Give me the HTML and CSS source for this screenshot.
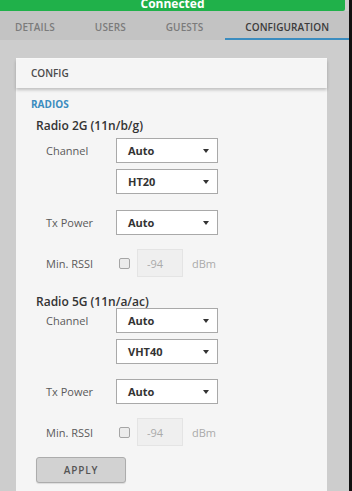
FILE: index.html
```html
<!DOCTYPE html>
<html lang="en">
  <head>
    <meta charset="UTF-8" />
    <meta name="viewport" content="width=device-width, initial-scale=1.0" />
    <title>Device Configuration</title>

    <link rel="stylesheet" href="styles.css">
  </head>
  <body>
    <div class="app">
      <div class="status">Connected</div>

      <nav class="tabs">
        <a class="tab">DETAILS</a>
        <a class="tab">USERS</a>
        <a class="tab">GUESTS</a>
        <a class="tab active">CONFIGURATION</a>
      </nav>

      <main class="content">
        <div class="card">
          <div class="card-header">CONFIG</div>

          <div class="card-body">
            <div class="section-title">RADIOS</div>

            <div class="radio">
              <h3 class="radio-title">Radio 2G (11n/b/g)</h3>

              <div class="row row-channel">
                <label>Channel</label>
                <div class="controls">
                  <div class="select"><span>Auto</span><i class="caret"></i></div>
                  <div class="select"><span>HT20</span><i class="caret"></i></div>
                </div>
              </div>

              <div class="row row-tx">
                <label>Tx Power</label>
                <div class="select"><span>Auto</span><i class="caret"></i></div>
              </div>

              <div class="row row-rssi">
                <label>Min. RSSI</label>
                <span class="checkbox"></span>
                <input type="text" class="rssi-input" value="-94" readonly />
                <span class="unit">dBm</span>
              </div>
            </div>

            <div class="radio radio-5g">
              <h3 class="radio-title">Radio 5G (11n/a/ac)</h3>

              <div class="row row-channel">
                <label>Channel</label>
                <div class="controls">
                  <div class="select"><span>Auto</span><i class="caret"></i></div>
                  <div class="select"><span>VHT40</span><i class="caret"></i></div>
                </div>
              </div>

              <div class="row row-tx">
                <label>Tx Power</label>
                <div class="select"><span>Auto</span><i class="caret"></i></div>
              </div>

              <div class="row row-rssi">
                <label>Min. RSSI</label>
                <span class="checkbox"></span>
                <input type="text" class="rssi-input" value="-94" readonly />
                <span class="unit">dBm</span>
              </div>
            </div>

            <button type="button" class="apply">APPLY</button>
          </div>
        </div>
      </main>
    </div>
  </body>
</html>
```

FILE: styles.css
```css
body {
  margin: 0;
  background-color: #111;
  font-family: "Open Sans", Arial, sans-serif;
  color: #333;
}
.app {
  width: 349px;
  height: 491px;
  overflow: hidden;
  background-color: #cdcdcd;
  display: flex;
  flex-direction: column;
}
.status {
  height: 11px;
  margin-right: 4px;
  background-color: #20b14a;
  border-bottom-right-radius: 2px;
  color: #fff;
  font-size: 12px;
  font-weight: 700;
  line-height: 8px;
  text-align: center;
  overflow: hidden;
}
.tabs {
  display: flex;
  height: 29px;
  background-color: #c3c3c3;
}
.tab {
  padding: 5px 20px 0;
  height: 22px;
  line-height: 22px;
  font-size: 10px;
  font-weight: 600;
  letter-spacing: 0.1px;
  color: #7b7b7b;
}
.tab:first-child {
  padding-left: 15px;
}
.tab.active {
  flex: 1;
  margin-left: 2px;
  color: #3b3b3b;
  border-bottom: 2px solid #3b8cbf;
}
.content {
  flex: 1;
  padding: 18px 22px 0 16px;
  display: flex;
}
.card {
  flex: 1;
  display: flex;
  flex-direction: column;
  background-color: #f4f4f4;
  border-top: 1px solid #fbfbfb;
}
.card-header {
  position: relative;
  z-index: 1;
  height: 29px;
  line-height: 29px;
  padding-left: 15px;
  font-size: 10px;
  font-weight: 600;
  color: #4a4a4a;
  background-color: #f5f5f5;
  box-shadow: 0 2px 3px rgba(0, 0, 0, 0.22);
}
.card-body {
  flex: 1;
  padding: 9px 0 0 15px;
  background-color: #f5f5f5;
}
.section-title {
  font-size: 10px;
  font-weight: 700;
  line-height: 14px;
  color: #3b8cbf;
}
.radio {
  padding-left: 5px;
}
.radio-title {
  margin: 7px 0 0;
  font-size: 12px;
  font-weight: 600;
  line-height: 16px;
  color: #333;
}
.radio-5g .radio-title {
  margin-top: 17px;
}
.row {
  display: flex;
  align-items: center;
  padding-left: 10px;
}
.row label {
  width: 70px;
  font-size: 11px;
  color: #5a5a5a;
}
.row-channel {
  align-items: flex-start;
  margin-top: 4px;
}
.row-channel label {
  line-height: 25px;
}
.radio-5g .row-channel {
  margin-top: -2px;
}
.controls {
  display: flex;
  flex-direction: column;
  gap: 6px;
}
.row-tx {
  margin-top: 16px;
}
.radio-5g .row-tx {
  margin-top: 15px;
}
.row-rssi {
  margin-top: 14px;
}
.select {
  box-sizing: border-box;
  width: 102px;
  height: 25px;
  padding: 0 8px 0 11px;
  display: flex;
  align-items: center;
  justify-content: space-between;
  background-color: #fff;
  border: 1px solid #a9a9a9;
  font-size: 11px;
  font-weight: 700;
  color: #333;
}
.caret {
  width: 0;
  height: 0;
  border-left: 3px solid transparent;
  border-right: 3px solid transparent;
  border-top: 4px solid #333;
}
.checkbox {
  box-sizing: border-box;
  width: 11px;
  height: 11px;
  margin-left: 3px;
  border: 1px solid #a5a5a5;
  border-radius: 2px;
  background-color: #ececec;
}
.rssi-input {
  box-sizing: border-box;
  width: 46px;
  height: 28px;
  margin: 0 0 0 7px;
  padding: 0 0 0 9px;
  border: 1px solid #e4e4e4;
  background-color: #efefef;
  font-family: "Open Sans", Arial, sans-serif;
  font-size: 11px;
  color: #aaa;
  outline: none;
}
.unit {
  margin-left: 9px;
  font-size: 11px;
  color: #aaa;
}
.apply {
  display: block;
  margin: 11px 0 0 5px;
  width: 90px;
  height: 26px;
  background-color: #d2d2d2;
  border: 1px solid #acacac;
  border-radius: 3px;
  box-shadow: 0 1px 1px rgba(0, 0, 0, 0.1);
  font-family: "Open Sans", Arial, sans-serif;
  font-size: 10px;
  font-weight: 600;
  letter-spacing: 0.8px;
  color: #555;
  cursor: pointer;
}
```
